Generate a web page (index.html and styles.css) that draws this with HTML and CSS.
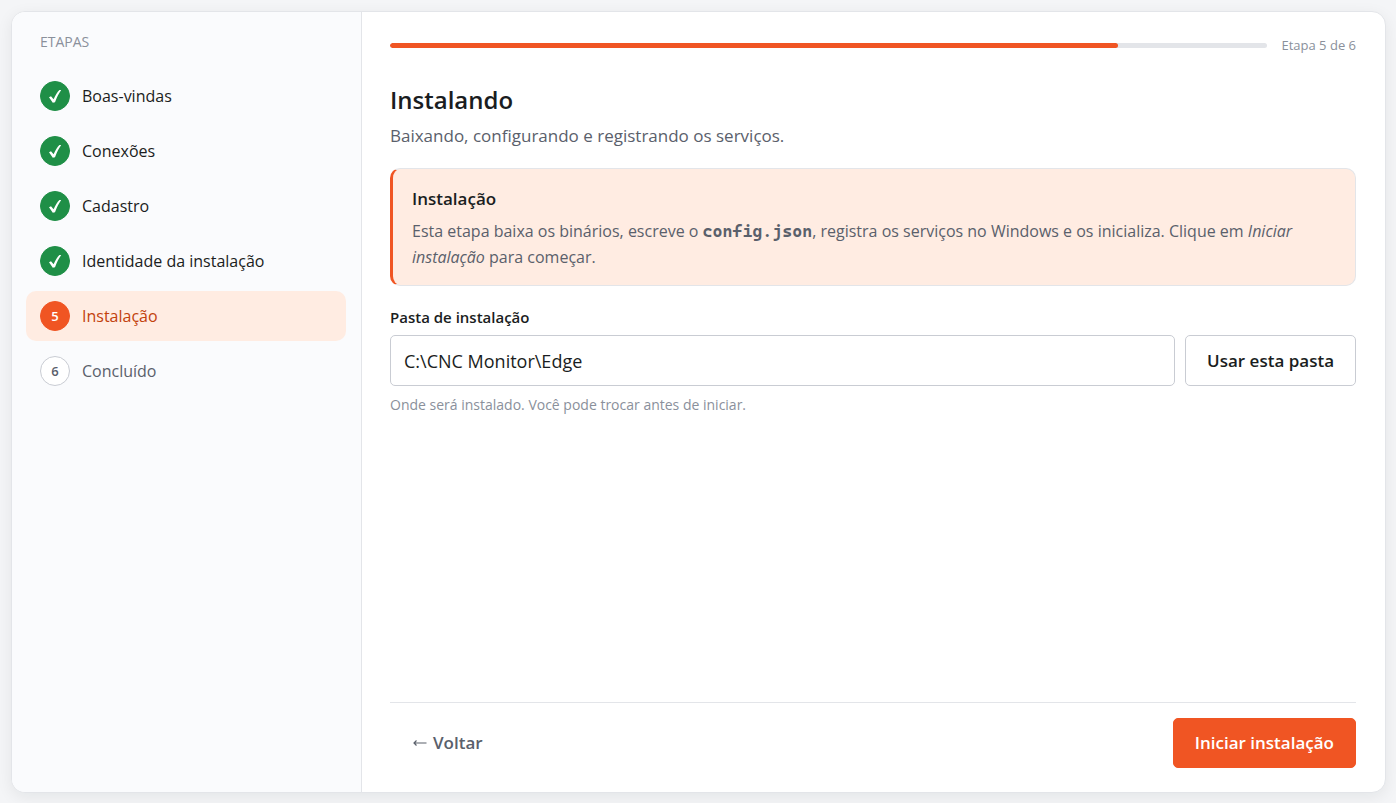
FILE: index.html
```
<!DOCTYPE html>
<html lang="pt-BR">
<head>
  <meta charset="UTF-8">
  <meta name="viewport" content="width=device-width, initial-scale=1.0">
  <title>Instalação - CNC Monitor Edge</title>
  <link rel="stylesheet" href="styles.css">
</head>
<body>

  <div class="wizard">
    <aside class="sidebar">
      <h2 class="sidebar-title">Etapas</h2>
      <ol class="steps">
        <li class="step done">
          <span class="step-dot"><svg viewBox="0 0 30 30" aria-hidden="true"><path d="M9 16.2 L11 15.2 L13.6 18.2 C15.4 14.2 17.2 11.2 19.4 9 L21.2 9 C18.8 12.4 16.8 16.4 15 21.2 L12.8 21.8 Z"/></svg></span>
          <span class="step-name">Boas-vindas</span>
        </li>
        <li class="step done">
          <span class="step-dot"><svg viewBox="0 0 30 30" aria-hidden="true"><path d="M9 16.2 L11 15.2 L13.6 18.2 C15.4 14.2 17.2 11.2 19.4 9 L21.2 9 C18.8 12.4 16.8 16.4 15 21.2 L12.8 21.8 Z"/></svg></span>
          <span class="step-name">Conexões</span>
        </li>
        <li class="step done">
          <span class="step-dot"><svg viewBox="0 0 30 30" aria-hidden="true"><path d="M9 16.2 L11 15.2 L13.6 18.2 C15.4 14.2 17.2 11.2 19.4 9 L21.2 9 C18.8 12.4 16.8 16.4 15 21.2 L12.8 21.8 Z"/></svg></span>
          <span class="step-name">Cadastro</span>
        </li>
        <li class="step done">
          <span class="step-dot"><svg viewBox="0 0 30 30" aria-hidden="true"><path d="M9 16.2 L11 15.2 L13.6 18.2 C15.4 14.2 17.2 11.2 19.4 9 L21.2 9 C18.8 12.4 16.8 16.4 15 21.2 L12.8 21.8 Z"/></svg></span>
          <span class="step-name">Identidade da instalação</span>
        </li>
        <li class="step active" aria-current="step">
          <span class="step-dot">5</span>
          <span class="step-name">Instalação</span>
        </li>
        <li class="step">
          <span class="step-dot">6</span>
          <span class="step-name">Concluído</span>
        </li>
      </ol>
    </aside>

    <main class="content">
      <div class="progress">
        <div class="progress-track">
          <div class="progress-fill" style="width: 83%"></div>
        </div>
        <span class="progress-label">Etapa 5 de 6</span>
      </div>

      <h1>Instalando</h1>
      <p class="subtitle">Baixando, configurando e registrando os serviços.</p>

      <section class="callout">
        <h3>Instalação</h3>
        <p>Esta etapa baixa os binários, escreve o <code>config.json</code>, registra os serviços no Windows e os inicializa. Clique em <em>Iniciar instalação</em> para começar.</p>
      </section>

      <div class="field">
        <label for="folder">Pasta de instalação</label>
        <div class="field-row">
          <input type="text" id="folder" value="C:\CNC Monitor\Edge" aria-describedby="folder-hint">
          <button type="button" class="btn">Usar esta pasta</button>
        </div>
        <p class="hint" id="folder-hint">Onde será instalado. Você pode trocar antes de iniciar.</p>
      </div>

      <footer class="actions">
        <button type="button" class="btn btn-ghost"><svg class="arrow" viewBox="0 0 16 12" aria-hidden="true"><path d="M14.5 6 H2 M4.5 3.5 L2 6 L4.5 8.5"/></svg>Voltar</button>
        <button type="button" class="btn btn-primary">Iniciar instalação</button>
      </footer>
    </main>
  </div>

</body>
</html>
```
FILE: styles.css
```
* {
  box-sizing: border-box;
}

body {
  margin: 0;
  min-height: 100vh;
  padding: 11px 10px 10px 11px;
  display: flex;
  background: #f4f5f7;
  color: #1a1d21;
  font-family: "Segoe UI", "Open Sans", "Noto Sans", sans-serif;
  font-size: 16px;
}

h1, h2, h3, p, ol {
  margin: 0;
  padding: 0;
}

.wizard {
  flex: 1;
  display: flex;
  background: #fff;
  border: 1px solid #e3e5e9;
  border-radius: 14px;
  box-shadow: 0 4px 16px rgba(20, 25, 35, 0.07);
  overflow: hidden;
}

/* sidebar */
.sidebar {
  width: 350px;
  flex-shrink: 0;
  padding: 20px 15px 20px 14px;
  background: #fafbfd;
  border-right: 1px solid #e3e5e9;
}

.sidebar-title {
  padding: 0 14px;
  margin-bottom: 19px;
  color: #8a909b;
  font-size: 14px;
  font-weight: 400;
  line-height: 20px;
  text-transform: uppercase;
}

.steps {
  display: flex;
  flex-direction: column;
  gap: 5px;
  list-style: none;
}

.step {
  display: flex;
  align-items: center;
  gap: 12px;
  padding: 10px 14px;
  border-radius: 10px;
  color: #5a606b;
  line-height: 30px;
}

.step-dot {
  width: 30px;
  height: 30px;
  display: flex;
  align-items: center;
  justify-content: center;
  flex-shrink: 0;
  border: 1px solid #c9ccd3;
  border-radius: 50%;
  background: #fff;
  font-size: 13px;
  font-weight: 600;
}

.step-dot svg {
  width: 30px;
  height: 30px;
  flex-shrink: 0;
  fill: #fff;
}

.step.done {
  color: #1a1d21;
}

.step.done .step-dot {
  background: #1f8f47;
  border-color: #1f8f47;
}

.step.active {
  background: #ffece2;
  color: #c2410c;
}

.step.active .step-dot {
  background: #f05523;
  border-color: #f05523;
  color: #fff;
}

/* main */
.content {
  flex: 1;
  min-width: 0;
  display: flex;
  flex-direction: column;
  padding: 24px 29px 24px 28px;
}

.progress {
  display: flex;
  align-items: center;
  gap: 14px;
  margin-bottom: 29px;
}

.progress-track {
  flex: 1;
  height: 5px;
  border-radius: 3px;
  background: #e3e5e9;
  overflow: hidden;
}

.progress-fill {
  height: 100%;
  border-radius: 3px;
  background: #f05523;
}

.progress-label {
  color: #8a909b;
  font-size: 13px;
  line-height: 19px;
}

h1 {
  font-size: 24px;
  font-weight: 600;
  line-height: 32px;
}

.subtitle {
  margin: 7px 0 19px;
  color: #5a606b;
  font-size: 17px;
  line-height: 26px;
}

.callout {
  padding: 17px 21px 15px 19px;
  margin-bottom: 20px;
  border: 1px solid #e3e5e9;
  border-left: 3px solid #f05523;
  border-radius: 10px;
  background: #ffece2;
}

.callout h3 {
  margin-bottom: 6px;
  font-size: 17px;
  font-weight: 600;
  line-height: 26px;
}

.callout p {
  color: #5a606b;
  line-height: 26px;
}

.callout code {
  font-family: "Cascadia Mono", "DejaVu Sans Mono", monospace;
  font-size: 17px;
  font-weight: 700;
  line-height: 1;
}

.field label {
  display: block;
  margin-bottom: 6px;
  font-size: 15px;
  font-weight: 600;
  line-height: 23px;
}

.field-row {
  display: flex;
  gap: 10px;
}

.field input {
  flex: 1;
  min-width: 0;
  height: 51px;
  padding: 0 13px;
  border: 1px solid #c9ccd3;
  border-radius: 5px;
  background: #fff;
  color: #1a1d21;
  font-family: inherit;
  font-size: 18px;
}

.hint {
  margin-top: 8px;
  color: #8a909b;
  font-size: 14px;
  line-height: 22px;
}

.btn {
  display: flex;
  align-items: center;
  justify-content: center;
  padding: 12px 21px;
  border: 1px solid #c9ccd3;
  border-radius: 5px;
  background: #fff;
  color: #1a1d21;
  font-family: inherit;
  font-size: 17px;
  font-weight: 600;
  line-height: 24px;
  cursor: pointer;
}

.btn-ghost {
  gap: 5px;
  border-color: transparent;
  background: transparent;
  color: #5a606b;
}

.btn-primary {
  background: #f05523;
  border-color: #f05523;
  color: #fff;
}

.arrow {
  width: 16px;
  height: 12px;
  fill: none;
  stroke: #5a606b;
  stroke-width: 1.2;
}

.actions {
  display: flex;
  justify-content: space-between;
  margin-top: auto;
  padding-top: 15px;
  border-top: 1px solid #e3e5e9;
}
```
